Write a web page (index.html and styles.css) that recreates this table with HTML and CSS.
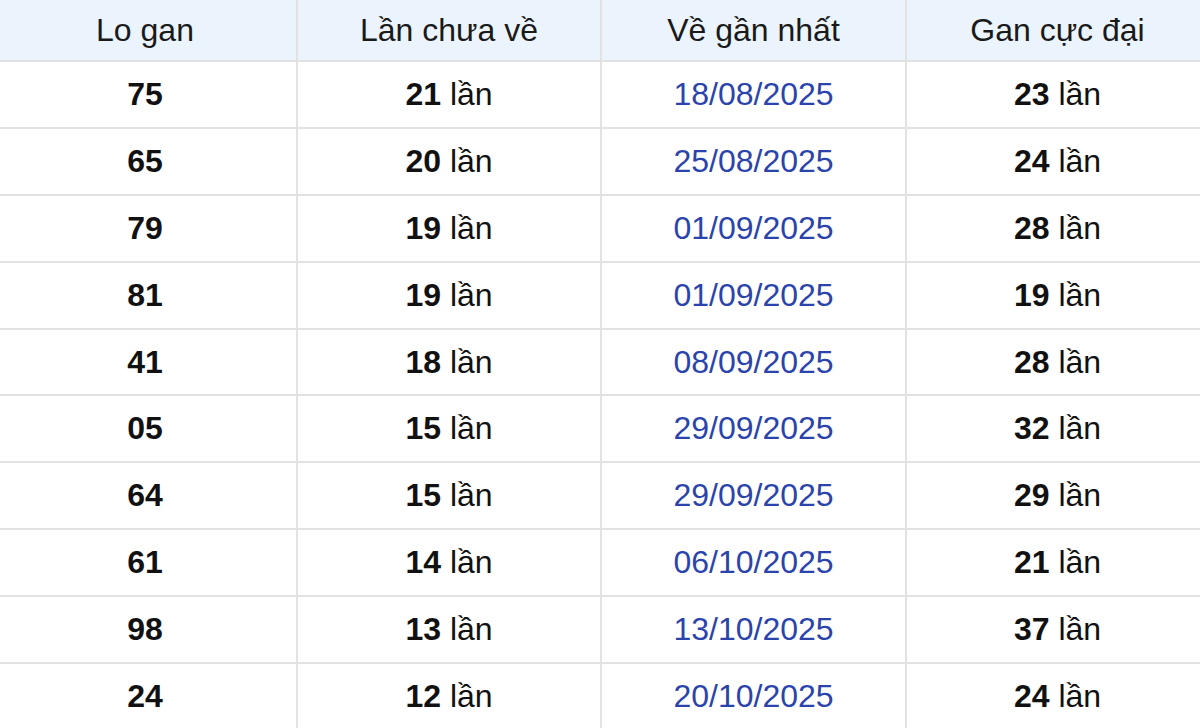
FILE: index.html
```html
<!DOCTYPE html>
<html lang="vi">
<head>
<meta charset="utf-8">
<link rel="stylesheet" href="styles.css">
</head>
<body>
<table class="gan">
<colgroup><col class="c1"><col class="c2"><col class="c3"><col class="c4"></colgroup>
<thead>
<tr><th>Lo gan</th><th>Lần chưa về</th><th>Về gần nhất</th><th>Gan cực đại</th></tr>
</thead>
<tbody>
<tr><td><b>75</b></td><td><b>21</b> lần</td><td class="date">18/08/2025</td><td><b>23</b> lần</td></tr>
<tr><td><b>65</b></td><td><b>20</b> lần</td><td class="date">25/08/2025</td><td><b>24</b> lần</td></tr>
<tr><td><b>79</b></td><td><b>19</b> lần</td><td class="date">01/09/2025</td><td><b>28</b> lần</td></tr>
<tr><td><b>81</b></td><td><b>19</b> lần</td><td class="date">01/09/2025</td><td><b>19</b> lần</td></tr>
<tr><td><b>41</b></td><td><b>18</b> lần</td><td class="date">08/09/2025</td><td><b>28</b> lần</td></tr>
<tr><td><b>05</b></td><td><b>15</b> lần</td><td class="date">29/09/2025</td><td><b>32</b> lần</td></tr>
<tr><td><b>64</b></td><td><b>15</b> lần</td><td class="date">29/09/2025</td><td><b>29</b> lần</td></tr>
<tr><td><b>61</b></td><td><b>14</b> lần</td><td class="date">06/10/2025</td><td><b>21</b> lần</td></tr>
<tr><td><b>98</b></td><td><b>13</b> lần</td><td class="date">13/10/2025</td><td><b>37</b> lần</td></tr>
<tr><td><b>24</b></td><td><b>12</b> lần</td><td class="date">20/10/2025</td><td><b>24</b> lần</td></tr>
</tbody>
</table>
</body>
</html>
```
FILE: styles.css
```css
html, body {
  margin: 0;
  padding: 0;
  background: #fff;
}
body {
  font-family: "Liberation Sans", Arial, sans-serif;
  color: #111;
  overflow: hidden;
}
.gan {
  width: 1200px;
  border-collapse: collapse;
  table-layout: fixed;
  font-size: 32px;
}
.c1 { width: 297px; }
.c2 { width: 304px; }
.c3 { width: 305px; }
.c4 { width: 294px; }
.gan th, .gan td {
  text-align: center;
  padding: 0;
  border: 2px solid #e2e2e2;
}
.gan tr > :first-child {
  border-left: 0;
  padding-right: 6px;
}
.gan tr > :last-child {
  border-right: 0;
  padding-left: 8px;
}
.gan thead th {
  border-top: 0;
  height: 60px;
  background: #ebf4fd;
  font-weight: normal;
  color: #1a1a1a;
}
.gan tbody td {
  height: 64.9px;
}
.gan b {
  font-weight: bold;
  color: #111;
}
.gan .date {
  color: #2b44ac;
}
```
